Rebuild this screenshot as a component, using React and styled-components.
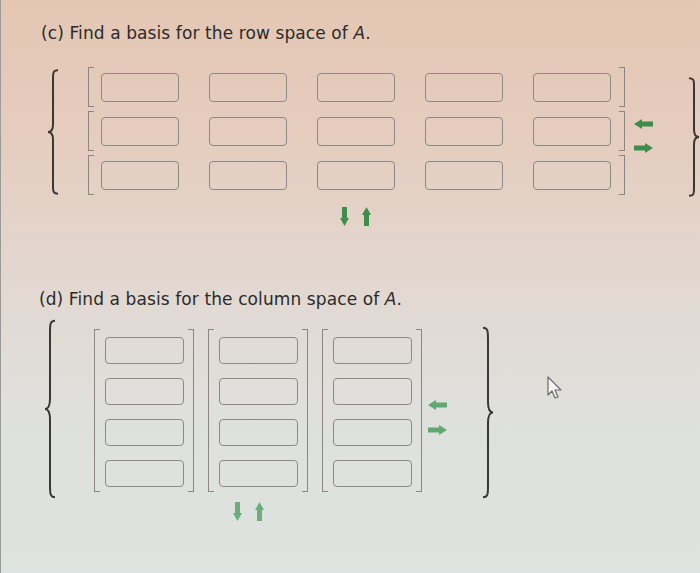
import React from "react";
import styled, { createGlobalStyle } from "styled-components";

const Global = createGlobalStyle`
  html, body { margin: 0; padding: 0; height: 100%; }
  body {
    background: linear-gradient(180deg, #e4c6b3 0%, #e5cdbf 25%, #e2d8d1 50%, #dfe0dc 72%, #dde3e0 100%);
    font-family: "DejaVu Sans", Verdana, sans-serif;
    color: #2b2b2b;
  }
  #root { min-height: 100%; }
`;

const Page = styled.div`
  width: 700px;
  height: 573px;
  overflow: hidden;
  position: relative;
  box-sizing: border-box;
  border-left: 1px solid #9a9a98;
`;

const Section = styled.div`
  padding: ${(p) => p.$pad};
`;

const Title = styled.div`
  font-size: 17px;
  line-height: 20px;
  height: 20px;
  margin-left: ${(p) => p.$indent}px;
  white-space: nowrap;
  letter-spacing: 0.1px;
`;

const SetRow = styled.div`
  display: flex;
  align-items: stretch;
  margin-top: ${(p) => p.$top}px;
  height: ${(p) => p.$h}px;
`;

const BraceBox = styled.div`
  width: 12px;
  flex: none;
  margin-left: ${(p) => p.$ml}px;
  padding: ${(p) => p.$pad};
  display: flex;
`;

const Rows = styled.div`
  display: flex;
  flex-direction: column;
  gap: 4px;
  margin-left: ${(p) => p.$ml}px;
`;

const VecRow = styled.div`
  display: flex;
  align-items: center;
  height: 40px;
`;

const Bracket = styled.div`
  width: 5px;
  align-self: stretch;
  flex: none;
  border: 1.5px solid #8c8683;
  ${(p) => (p.$right ? "border-left: none;" : "border-right: none;")}
`;

const Cells = styled.div`
  display: flex;
  flex-direction: ${(p) => (p.$col ? "column" : "row")};
  gap: ${(p) => p.$gap}px;
  margin: ${(p) => p.$m};
`;

const Cell = styled.div`
  width: ${(p) => p.$w}px;
  height: ${(p) => p.$h}px;
  box-sizing: border-box;
  border: 1.5px solid #8f8984;
  border-radius: 4px;
  flex: none;
`;

const Columns = styled.div`
  display: flex;
  gap: 14px;
  margin-left: ${(p) => p.$ml}px;
  padding: ${(p) => p.$pad};
`;

const VecCol = styled.div`
  display: flex;
  height: 163px;
`;

const SideArrows = styled.div`
  display: flex;
  flex-direction: column;
  justify-content: center;
  gap: ${(p) => p.$gap}px;
  margin: ${(p) => p.$m};
  flex: none;
`;

const UpDown = styled.div`
  display: flex;
  gap: ${(p) => p.$gap}px;
  margin: ${(p) => p.$m};
  height: 20px;
`;

const Cursor = styled.div`
  margin: ${(p) => p.$m};
`;

function Brace({ right }) {
  const d = right
    ? "M1 1 C6 1 6 3 6 8 L6 44 C6 48 8 50 11 50 C8 50 6 52 6 56 L6 92 C6 97 6 99 1 99"
    : "M11 1 C6 1 6 3 6 8 L6 44 C6 48 4 50 1 50 C4 50 6 52 6 56 L6 92 C6 97 6 99 11 99";
  return (
    <svg width="12" height="100%" viewBox="0 0 12 100" preserveAspectRatio="none">
      <path d={d} fill="none" stroke="#3a3836" strokeWidth="2" vectorEffect="non-scaling-stroke" />
    </svg>
  );
}

function HArrow({ dir, color }) {
  const flip = dir === "left";
  return (
    <svg width="19" height="10" viewBox="0 0 19 10">
      <g transform={flip ? "translate(19,0) scale(-1,1)" : undefined}>
        <rect x="0" y="2.5" width="12" height="5" fill={color} />
        <polygon points="11,0 19,5 11,10" fill={color} />
      </g>
    </svg>
  );
}

function VArrow({ dir, color }) {
  const flip = dir === "up";
  return (
    <svg width="9" height="19" viewBox="0 0 9 19">
      <g transform={flip ? "translate(0,19) scale(1,-1)" : undefined}>
        <rect x="2" y="0" width="5" height="12" fill={color} />
        <polygon points="0,11 9,11 4.5,19" fill={color} />
      </g>
    </svg>
  );
}

export default function App() {
  const rows = [0, 1, 2];
  const rowCells = [0, 1, 2, 3, 4];
  const cols = [0, 1, 2];
  const colCells = [0, 1, 2, 3];
  return (
    <Page>
      <Global />
      <Section $pad="23px 0 0 0">
        <Title $indent={40}>(c) Find a basis for the row space of <i>A</i>.</Title>
        <SetRow $top={24} $h={130}>
          <BraceBox $ml={46} $pad="2px 0 2px 0">
            <Brace />
          </BraceBox>
          <Rows $ml={29}>
            {rows.map((r) => (
              <VecRow key={r}>
                <Bracket />
                <Cells $gap={30} $m="0 8px 0 7px">
                  {rowCells.map((c) => (
                    <Cell key={c} $w={78} $h={29} />
                  ))}
                </Cells>
                <Bracket $right />
              </VecRow>
            ))}
          </Rows>
          <SideArrows $gap={14} $m="8px 0 0 9px">
            <HArrow dir="left" color="#3f8c4b" />
            <HArrow dir="right" color="#3f8c4b" />
          </SideArrows>
          <BraceBox $ml={35} $pad="10px 0 0 0">
            <Brace right />
          </BraceBox>
        </SetRow>
        <UpDown $gap={13} $m="10px 0 0 339px">
          <VArrow dir="down" color="#3f8c4b" />
          <VArrow dir="up" color="#3f8c4b" />
        </UpDown>
      </Section>
      <Section $pad="62px 0 0 0">
        <Title $indent={38}>(d) Find a basis for the column space of <i>A</i>.</Title>
        <SetRow $top={10} $h={180}>
          <BraceBox $ml={43} $pad="0">
            <Brace />
          </BraceBox>
          <Columns $ml={38} $pad="10px 0 0 0">
            {cols.map((c) => (
              <VecCol key={c}>
                <Bracket />
                <Cells $col $gap={14} $m="8px 4px 0 5px">
                  {colCells.map((k) => (
                    <Cell key={k} $w={79} $h={27} />
                  ))}
                </Cells>
                <Bracket $right />
              </VecCol>
            ))}
          </Columns>
          <SideArrows $gap={15} $m="16px 0 0 6px">
            <HArrow dir="left" color="#5fa870" />
            <HArrow dir="right" color="#5fa870" />
          </SideArrows>
          <BraceBox $ml={35} $pad="7px 0 0 0">
            <Brace right />
          </BraceBox>
          <Cursor $m="57px 0 0 53px">
            <svg width="16" height="24" viewBox="0 0 16 24">
              <path d="M1 1 L1 19 L5 15 L8 22 L11 21 L8 14 L14 14 Z" fill="#f4f4f2" stroke="#6a6a6a" strokeWidth="1.2" strokeLinejoin="round" />
            </svg>
          </Cursor>
        </SetRow>
        <UpDown $gap={13} $m="3px 0 0 232px">
          <VArrow dir="down" color="#6aae7c" />
          <VArrow dir="up" color="#6aae7c" />
        </UpDown>
      </Section>
    </Page>
  );
}
